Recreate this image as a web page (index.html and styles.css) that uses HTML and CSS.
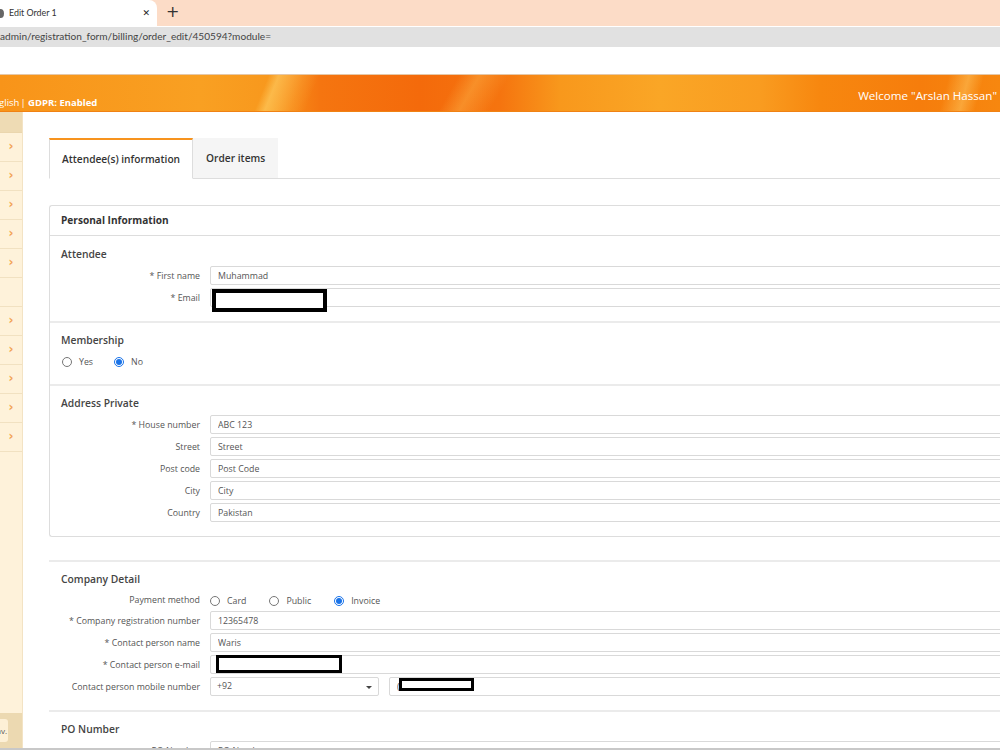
FILE: index.html
```html
<!DOCTYPE html>
<html lang="en">
<head>
    <meta charset="UTF-8">
    <meta name="viewport" content="width=device-width, initial-scale=1.0">
    <title>Edit Order 1</title>
    <link rel="stylesheet" href="styles.css">
</head>
<body>
    <div class="browser">
        <div class="tab-strip">
            <div class="browser-tab">
                <span class="favicon"></span>
                <span class="tab-title">Edit Order 1</span>
                <span class="tab-close">&#x2715;</span>
            </div>
            <span class="new-tab">+</span>
        </div>
        <div class="toolbar">
            <div class="url-bar">admin/registration_form/billing/order_edit/450594?module=</div>
        </div>
        <div class="bookmarks"></div>
    </div>

    <header class="top-header">
        <div class="header-left">English<span class="sep">|</span> <b>GDPR: Enabled</b></div>
        <div class="header-right">Welcome "Arslan Hassan"</div>
    </header>

    <div class="layout">
        <aside class="sidebar">
            <div class="side-head"></div>
            <div class="side-item">›</div>
            <div class="side-item">›</div>
            <div class="side-item">›</div>
            <div class="side-item">›</div>
            <div class="side-item">›</div>
            <div class="side-item"></div>
            <div class="side-item">›</div>
            <div class="side-item">›</div>
            <div class="side-item">›</div>
            <div class="side-item">›</div>
            <div class="side-item">›</div>
            <div class="side-fill"></div>
            <div class="side-foot"><div class="side-btn"><span>Nav.</span></div></div>
        </aside>

        <main class="content">
            <div class="tabs">
                <div class="tab active">Attendee(s) information</div>
                <div class="tab">Order items</div>
                <div class="tab-rest"></div>
            </div>

            <div class="panel">
                <div class="panel-heading">Personal Information</div>

                <div class="section section-attendee">
                    <h3 class="section-title">Attendee</h3>
                    <div class="form-grid">
                        <label class="form-label">* First name</label>
                        <div class="field"><input class="form-input" type="text" value="Muhammad"></div>
                        <label class="form-label">* Email</label>
                        <div class="field">
                            <input class="form-input" type="text" value="">
                            <span class="redact redact-email"></span>
                        </div>
                    </div>
                </div>

                <div class="section section-member">
                    <h3 class="section-title">Membership</h3>
                    <div class="radio-row">
                        <label class="radio"><input type="radio" name="member"> Yes</label>
                        <label class="radio"><input type="radio" name="member" checked> No</label>
                    </div>
                </div>

                <div class="section section-address">
                    <h3 class="section-title">Address Private</h3>
                    <div class="form-grid">
                        <label class="form-label">* House number</label>
                        <div class="field"><input class="form-input" type="text" value="ABC 123"></div>
                        <label class="form-label">Street</label>
                        <div class="field"><input class="form-input" type="text" placeholder="Street"></div>
                        <label class="form-label">Post code</label>
                        <div class="field"><input class="form-input" type="text" placeholder="Post Code"></div>
                        <label class="form-label">City</label>
                        <div class="field"><input class="form-input" type="text" placeholder="City"></div>
                        <label class="form-label">Country</label>
                        <div class="field"><input class="form-input" type="text" value="Pakistan"></div>
                    </div>
                </div>
            </div>

            <div class="block block-company">
                <h3 class="section-title">Company Detail</h3>
                <div class="form-grid">
                    <label class="form-label">Payment method</label>
                    <div class="radio-row pay-row">
                        <label class="radio"><input type="radio" name="pay"> Card</label>
                        <label class="radio"><input type="radio" name="pay"> Public</label>
                        <label class="radio"><input type="radio" name="pay" checked> Invoice</label>
                    </div>
                    <label class="form-label">* Company registration number</label>
                    <div class="field"><input class="form-input" type="text" value="12365478"></div>
                    <label class="form-label">* Contact person name</label>
                    <div class="field"><input class="form-input" type="text" value="Waris"></div>
                    <label class="form-label">* Contact person e-mail</label>
                    <div class="field">
                        <input class="form-input" type="text" value="">
                        <span class="redact redact-contact"></span>
                    </div>
                    <label class="form-label">Contact person mobile number</label>
                    <div class="phone-row">
                        <div class="select-box">+92<span class="caret"></span></div>
                        <div class="field">
                            <input class="form-input" type="text" value="(">
                            <span class="redact redact-mobile"></span>
                        </div>
                    </div>
                </div>
            </div>

            <div class="block block-po">
                <h3 class="section-title">PO Number</h3>
                <div class="form-grid">
                    <label class="form-label">PO Number</label>
                    <div class="field"><input class="form-input" type="text" placeholder="PO Number"></div>
                </div>
            </div>
        </main>
    </div>
    <div class="window-edge"></div>
</body>
</html>
```

FILE: styles.css
```css
 body {
     margin: 0;
     width: 1000px;
     height: 750px;
     overflow: hidden;
     font-family: "Open Sans", sans-serif;
     color: #555;
     background-color: #fff;
 }

 /* browser chrome */

 .tab-strip {
     height: 26px;
     background-color: #fcdcc7;
     display: flex;
     align-items: flex-start;
 }

 .browser-tab {
     width: 157px;
     height: 26px;
     background-color: #fff;
     border-top-right-radius: 8px;
     display: flex;
     align-items: center;
     font-family: Lato, sans-serif;
     font-size: 8.9px;
     color: #333;
     box-sizing: border-box;
     padding-right: 7px;
 }

 .favicon {
     width: 7px;
     height: 9px;
     margin-left: -3px;
     border-radius: 50%;
     background-color: #666;
 }

 .tab-title {
     margin-left: 5px;
     margin-top: -1px;
     flex-grow: 1;
 }

 .tab-close {
     font-family: "DejaVu Sans", sans-serif;
     font-size: 9px;
     font-weight: bold;
     color: #222;
 }

 .new-tab {
     margin-left: 9px;
     font-family: "DejaVu Sans", sans-serif;
     font-size: 16px;
     line-height: 24px;
     color: #333;
 }

 .toolbar {
     height: 22px;
     padding-top: 1px;
     box-sizing: border-box;
     background-color: #fff;
 }

 .url-bar {
     height: 20px;
     background-color: #e1e1e1;
     font-family: Lato, sans-serif;
     font-size: 10.1px;
     line-height: 19px;
     color: #444;
 }

 .bookmarks {
     height: 26px;
     background-color: #fff;
     border-bottom: 1px solid #e5c8a8;
 }

 /* orange header */

 .top-header {
     height: 36px;
     display: flex;
     justify-content: space-between;
     color: #fff;
     font-family: "Open Sans", sans-serif;
     background:
        linear-gradient(112deg, transparent 0 26.5%, rgba(255, 214, 110, 0.55) 27.5%, rgba(255, 200, 90, 0.2) 30%, transparent 31.5%),
        linear-gradient(120deg, transparent 0 45%, rgba(255, 200, 90, 0.35) 47%, transparent 50%),
        linear-gradient(105deg, transparent 0 94%, rgba(255, 210, 110, 0.45) 96%, transparent 97.5%),
        linear-gradient(90deg, #f89419 0%, #f9a022 20%, #f8981d 27%, #f57510 32%, #f46a0b 42%, #f5740f 50%, #f8981c 56%, #faa626 66%, #f99c20 76%, #f7870f 82%, #f67d0c 92%, #f7870f 100%);
     border-bottom: 1px solid #f08214;
 }

 .header-left {
     font-size: 9.5px;
     margin-top: 21px;
     text-indent: -12px;
     white-space: nowrap;
 }

 .header-left .sep {
     margin-left: 1px;
 }

 .header-left b {
     font-weight: 700;
 }

 .header-right {
     font-size: 11.6px;
     margin-top: 13px;
     padding-right: 3px;
     white-space: nowrap;
 }

 /* layout */

 .layout {
     display: flex;
     height: 639px;
 }

 .sidebar {
     width: 22px;
     flex-shrink: 0;
     background-color: #fef2da;
     border-right: 1px solid #f3e3c4;
     display: flex;
     flex-direction: column;
 }

 .side-head {
     height: 20px;
     background-color: #eedbb4;
     border-bottom: 1px solid #ead6ae;
 }

 .side-item {
     height: 28px;
     border-bottom: 1px solid #f1e1c1;
     color: #f2a352;
     font-size: 12px;
     font-weight: bold;
     line-height: 27px;
     text-align: center;
     font-family: "DejaVu Sans", sans-serif;
 }

 .side-fill {
     flex-grow: 1;
 }

 .side-foot {
     height: 38px;
     background-color: #ecd9b1;
     overflow: hidden;
     padding-top: 6px;
     box-sizing: border-box;
 }

 .side-btn {
     display: flex;
     justify-content: flex-end;
     width: 8px;
     height: 23px;
     background-color: #fdf0d6;
     border-radius: 0 3px 3px 0;
     font-size: 8px;
     line-height: 23px;
     overflow: hidden;
     white-space: nowrap;
     color: #555;
 }

 .side-btn span {
     flex-shrink: 0;
     padding-right: 1px;
 }

 .content {
     width: 990px;
     flex-shrink: 0;
     padding: 26px 0 0 26px;
     box-sizing: border-box;
 }

 /* tabs */

 .tabs {
     display: flex;
     height: 41px;
 }

 .tab {
     font-size: 10.2px;
     font-weight: 600;
     color: #333;
     background-color: #f5f5f5;
     height: 40px;
     line-height: 40px;
     padding: 0 13px;
     border-bottom: 1px solid #ddd;
 }

 .tab.active {
     background-color: #fff;
     border-top: 2px solid #f7931e;
     border-left: 1px solid #ddd;
     border-right: 1px solid #ddd;
     border-bottom: 1px solid #fff;
     height: 38px;
     line-height: 38px;
     padding: 0 12px;
 }

 .tab-rest {
     flex-grow: 1;
     border-bottom: 1px solid #ddd;
 }

 /* panel */

 .panel {
     margin-top: 26px;
     border: 1px solid #ddd;
     border-radius: 3px;
     border-right: none;
 }

 .panel-heading {
     height: 29px;
     line-height: 29px;
     padding-left: 11px;
     font-size: 10.1px;
     font-weight: 700;
     color: #333;
     border-bottom: 1px solid #ddd;
 }

 .section {
     padding: 11px 0 14px 11px;
     border-bottom: 2px solid #ebebeb;
 }

 .section-member {
     padding-top: 10px;
     padding-bottom: 16px;
 }

 .section-address {
     padding-top: 10px;
     padding-bottom: 14px;
     border-bottom: none;
 }

 .section-title {
     margin: 0 0 4px 0;
     font-size: 10.3px;
     line-height: 15px;
     font-weight: 600;
     color: #444;
 }

 .section-member .section-title {
     margin-bottom: 7px;
 }

 .form-grid {
     display: grid;
     grid-template-columns: 139px 1fr;
     column-gap: 10px;
     row-gap: 3px;
     align-items: center;
 }

 .form-label {
     text-align: right;
     font-size: 8.8px;
     color: #555;
     white-space: nowrap;
 }

 .field {
     position: relative;
 }

 .form-input {
     display: block;
     width: 100%;
     height: 19px;
     box-sizing: border-box;
     border: 1px solid #d9d9d9;
     border-radius: 2px;
     padding: 0 7px;
     font-family: "Open Sans", sans-serif;
     font-size: 8.8px;
     color: #555;
     background-color: #fff;
     margin: 0;
 }

 .form-input::placeholder {
     color: #555;
 }

 .radio-row {
     display: flex;
     align-items: center;
     height: 13px;
 }

 .radio {
     display: flex;
     align-items: center;
     font-size: 8.8px;
     color: #555;
     margin-right: 23px;
 }

 .radio input {
     width: 10px;
     height: 10px;
     margin: 0 7px 0 0;
     accent-color: #1a73e8;
 }

 .section-member .radio-row {
     margin-left: 1px;
 }

 .section-member .radio {
     margin-right: 21px;
 }

 .pay-row {
     height: 15px;
     padding-top: 2px;
 }

 /* other blocks */

 .block {
     border-top: 2px solid #ebebeb;
     padding: 10px 0 15px 12px;
 }

 .block-company {
     margin-top: 23px;
     padding-bottom: 14px;
 }

 .block-company .section-title {
     margin-bottom: 4px;
 }

 .phone-row {
     display: flex;
     gap: 10px;
 }

 .select-box {
     position: relative;
     width: 169px;
     flex-shrink: 0;
     height: 19px;
     box-sizing: border-box;
     border: 1px solid #d9d9d9;
     border-radius: 2px;
     padding-left: 6px;
     font-size: 8.8px;
     line-height: 17px;
     color: #555;
 }

 .caret {
     position: absolute;
     right: 6px;
     top: 8px;
     border-left: 3px solid transparent;
     border-right: 3px solid transparent;
     border-top: 3px solid #444;
 }

 .phone-row .field {
     flex-grow: 1;
 }

 /* blacked-out values */

 .redact {
     position: absolute;
     background-color: #fff;
     border: 4px solid #000;
     box-sizing: border-box;
 }

 .redact-email {
     left: 2px;
     top: 1px;
     width: 115px;
     height: 23px;
 }

 .redact-contact {
     left: 6px;
     top: 0;
     width: 126px;
     height: 18px;
     border-width: 3px;
 }

 .redact-mobile {
     left: 10px;
     top: 1px;
     width: 75px;
     height: 13px;
     border-width: 3px;
 }

 .window-edge {
     position: fixed;
     left: 0;
     right: 0;
     bottom: 0;
     height: 2px;
     background-color: #c8c8c8;
 }
```
